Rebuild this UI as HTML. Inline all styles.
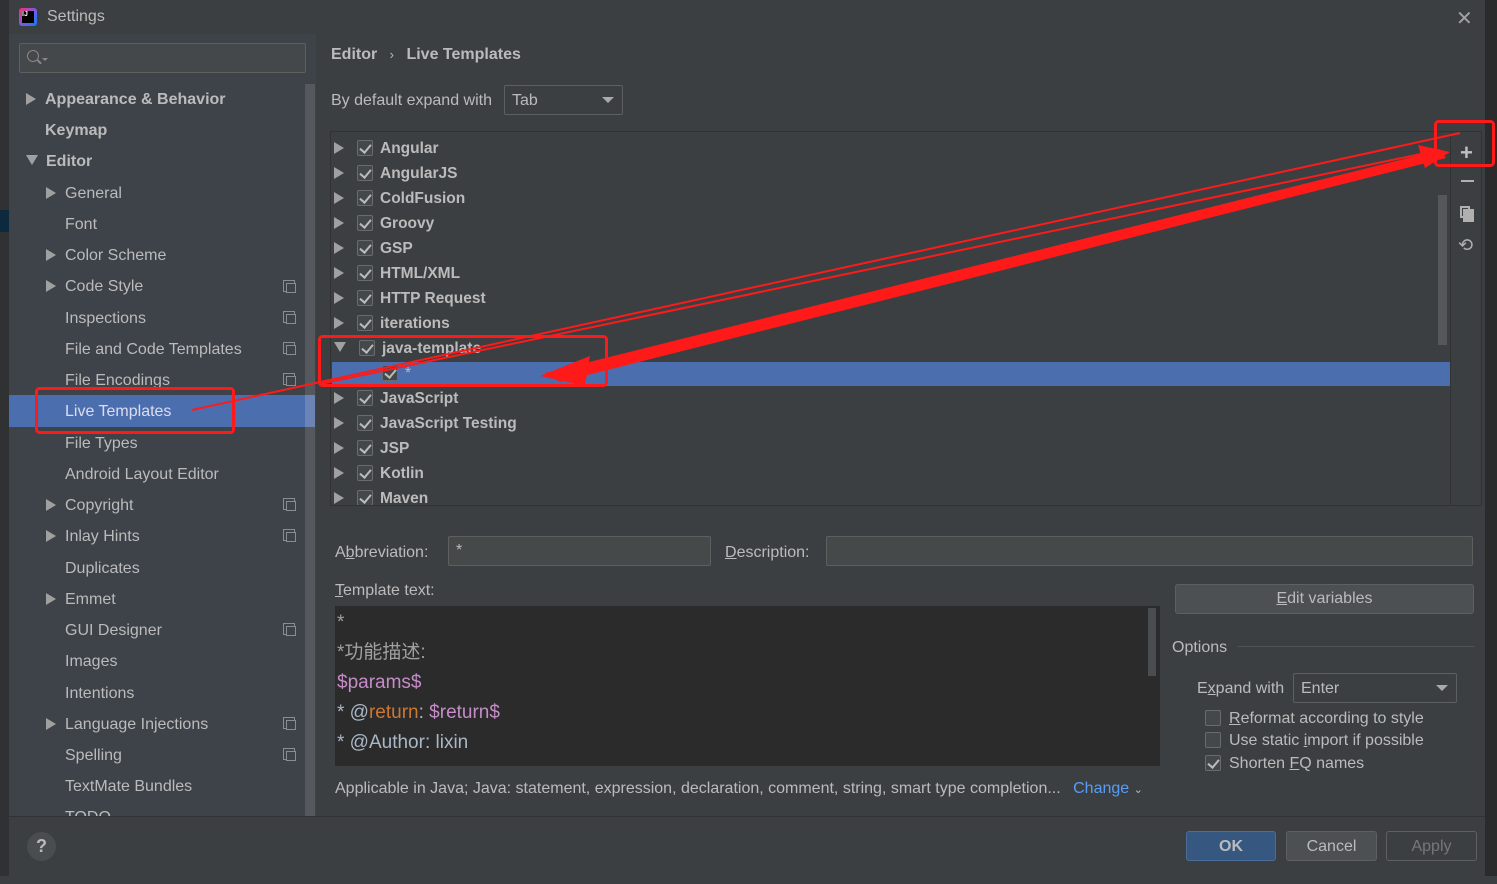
<!DOCTYPE html>
<html><head><meta charset="utf-8"><style>
*{box-sizing:border-box;margin:0;padding:0}
body{width:1497px;height:884px;background:#2b2b2b;font-family:"Liberation Sans","Noto Sans CJK SC",sans-serif;color:#bbbbbb;font-size:16px;position:relative;overflow:hidden}
.a{position:absolute}
.dlg{left:9px;top:0;width:1476px;height:876px;background:#3c3f41}
.side{left:9px;top:34px;width:307px;height:783px;background:#3e4249}
.it{position:absolute;left:0;height:31px;line-height:31px;white-space:nowrap}
.tri{display:inline-block;width:0;height:0;border-top:6px solid transparent;border-bottom:6px solid transparent;border-left:10px solid #a0a0a0;margin-right:9px;vertical-align:-1px}
.trd{display:inline-block;width:0;height:0;border-left:6px solid transparent;border-right:6px solid transparent;border-top:10px solid #a0a0a0;margin-right:8px;vertical-align:1px}
.cp{position:absolute;left:283px;width:12px;height:12px;border:1px solid #8a8d90;}
.cp:after{content:"";position:absolute;left:2px;top:2px;width:8px;height:8px;border:1px solid #8a8d90;background:#3e4249}
.row{position:absolute;left:334px;height:25px;line-height:25px;font-weight:bold;white-space:nowrap;font-size:15.5px}
.cb{display:inline-block;width:16px;height:16px;border:1px solid #6b6b6b;border-radius:2px;background:#43494a;vertical-align:-3px;margin-right:6px;position:relative}
.row .cb{margin-left:4px;margin-right:7px}
.cb.k:after{content:"";position:absolute;left:4px;top:1px;width:5px;height:9px;border-right:2px solid #bbb;border-bottom:2px solid #bbb;transform:rotate(40deg)}
.inp{background:#45494a;border:1px solid #5e6060;border-radius:2px}
u{text-decoration:underline}
.mono{font-family:"Liberation Sans","Noto Sans CJK SC",sans-serif;font-size:19px}
.btn{position:absolute;height:30px;line-height:28px;text-align:center;border:1px solid #5e6060;border-radius:3px;background:#4c5052}
</style></head><body>
<div class="a" style="left:0;top:0;width:9px;height:884px;background:#2f3133"></div>
<div class="a" style="left:0;top:210px;width:9px;height:22px;background:#0d293e"></div>
<div class="a dlg"></div>
<div class="a" style="left:0;top:876px;width:1497px;height:8px;background:#3c3f41"></div>
<div class="a" style="left:19px;top:8px;width:18px;height:18px;background:linear-gradient(135deg,#fe315d,#7c59e3,#087cfa);border-radius:3px"></div>
<div class="a" style="left:22px;top:11px;width:12px;height:12px;background:#000;color:#fff;font-size:7px;font-weight:bold;line-height:8px">IJ</div>
<div class="a" style="left:47px;top:8px;font-size:16px">Settings</div>
<div class="a" style="left:1456px;top:6px;font-size:20px;color:#a0a0a0">✕</div>

<div class="a side"></div>
<div class="a inp" style="left:19px;top:43px;width:287px;height:30px;background:#45484a"></div>
<div class="a" style="left:27px;top:50px;width:12px;height:12px;border:1.5px solid #888;border-radius:50%"></div>
<div class="a" style="left:37px;top:61px;width:5px;height:1.5px;background:#888;transform:rotate(45deg)"></div>
<div class="a" style="left:42px;top:58px;border-left:3px solid transparent;border-right:3px solid transparent;border-top:3px solid #888"></div>
<div class="a" style="left:305px;top:84px;width:10px;height:733px;background:#55585d"></div>
<div class="a" style="left:9px;top:395px;width:296px;height:32px;background:#4b6eaf"></div>
<div class="a" style="left:305px;top:395px;width:10px;height:32px;background:#6c84b5"></div>

<div class="a" style="left:26px;top:1px;width:280px">
<div class="it" style="top:83px;font-weight:bold"><span class="tri"></span>Appearance &amp; Behavior</div>
<div class="it" style="top:114px;left:19px;font-weight:bold">Keymap</div>
<div class="it" style="top:145px;font-weight:bold"><span class="trd"></span>Editor</div>
<div class="it" style="top:177px;left:20px"><span class="tri"></span>General</div>
<div class="it" style="top:208px;left:39px">Font</div>
<div class="it" style="top:239px;left:20px"><span class="tri"></span>Color Scheme</div>
<div class="it" style="top:270px;left:20px"><span class="tri"></span>Code Style</div>
<div class="it" style="top:302px;left:39px">Inspections</div>
<div class="it" style="top:333px;left:39px">File and Code Templates</div>
<div class="it" style="top:364px;left:39px">File Encodings</div>
<div class="it" style="top:395px;left:39px;color:#dde">Live Templates</div>
<div class="it" style="top:427px;left:39px">File Types</div>
<div class="it" style="top:458px;left:39px">Android Layout Editor</div>
<div class="it" style="top:489px;left:20px"><span class="tri"></span>Copyright</div>
<div class="it" style="top:520px;left:20px"><span class="tri"></span>Inlay Hints</div>
<div class="it" style="top:552px;left:39px">Duplicates</div>
<div class="it" style="top:583px;left:20px"><span class="tri"></span>Emmet</div>
<div class="it" style="top:614px;left:39px">GUI Designer</div>
<div class="it" style="top:645px;left:39px">Images</div>
<div class="it" style="top:677px;left:39px">Intentions</div>
<div class="it" style="top:708px;left:20px"><span class="tri"></span>Language Injections</div>
<div class="it" style="top:739px;left:39px">Spelling</div>
<div class="it" style="top:770px;left:39px">TextMate Bundles</div>
<div class="it" style="top:801px;left:39px;height:15px;overflow:hidden">TODO</div>
</div>
<div class="a cp" style="top:280px"></div><div class="a cp" style="top:311px"></div><div class="a cp" style="top:342px"></div><div class="a cp" style="top:373px"></div><div class="a cp" style="top:498px"></div><div class="a cp" style="top:529px"></div><div class="a cp" style="top:623px"></div><div class="a cp" style="top:717px"></div><div class="a cp" style="top:748px"></div>

<div class="a" style="left:331px;top:46px;font-weight:bold">Editor <span style="font-weight:normal;margin:0 8px;font-size:13px">›</span> Live Templates</div>
<div class="a" style="left:331px;top:92px">By default expand with</div>
<div class="a inp" style="left:504px;top:85px;width:119px;height:30px;background:#3c3f41;padding:6px 7px">Tab</div>
<div class="a" style="left:602px;top:97px;border-left:6px solid transparent;border-right:6px solid transparent;border-top:6px solid #aaa"></div>

<div class="a" style="left:330px;top:131px;width:1152px;height:375px;border:1px solid #323232;background:#3c3f41"></div>
<div class="a" style="left:1450px;top:132px;width:1px;height:373px;background:#323232"></div>
<div class="a" style="left:1438px;top:195px;width:9px;height:150px;background:#55585b"></div>
<div class="a" style="left:332px;top:362px;width:1118px;height:24px;background:#4b6eaf"></div>
<div class="a" style="left:1460px;top:140px;font-size:22px;color:#c0c0c0;font-weight:bold">+</div>
<div class="a" style="left:1461px;top:180px;width:13px;height:2px;background:#b0b0b0"></div>
<div class="a" style="left:1460px;top:206px;width:10px;height:12px;border:2px solid #b0b0b0"></div>
<div class="a" style="left:1463px;top:209px;width:11px;height:13px;background:#b0b0b0"></div>
<div class="a" style="left:1458px;top:235px;font-size:18px;color:#b0b0b0">⟲</div>

<div class="row" style="top:136px"><span class="tri"></span><span class="cb k"></span>Angular</div>
<div class="row" style="top:161px"><span class="tri"></span><span class="cb k"></span>AngularJS</div>
<div class="row" style="top:186px"><span class="tri"></span><span class="cb k"></span>ColdFusion</div>
<div class="row" style="top:211px"><span class="tri"></span><span class="cb k"></span>Groovy</div>
<div class="row" style="top:236px"><span class="tri"></span><span class="cb k"></span>GSP</div>
<div class="row" style="top:261px"><span class="tri"></span><span class="cb k"></span>HTML/XML</div>
<div class="row" style="top:286px"><span class="tri"></span><span class="cb k"></span>HTTP Request</div>
<div class="row" style="top:311px"><span class="tri"></span><span class="cb k"></span>iterations</div>
<div class="row" style="top:336px"><span class="trd" style="margin-right:9px"></span><span class="cb k"></span>java-template</div>
<div class="row" style="top:361px;left:378px;font-weight:normal"><span class="cb k"></span>*</div>
<div class="row" style="top:386px"><span class="tri"></span><span class="cb k"></span>JavaScript</div>
<div class="row" style="top:411px"><span class="tri"></span><span class="cb k"></span>JavaScript Testing</div>
<div class="row" style="top:436px"><span class="tri"></span><span class="cb k"></span>JSP</div>
<div class="row" style="top:461px"><span class="tri"></span><span class="cb k"></span>Kotlin</div>
<div class="row" style="top:486px;height:19px;overflow:hidden"><span class="tri"></span><span class="cb k"></span>Maven</div>

<div class="a" style="left:335px;top:544px">A<u>b</u>breviation:</div>
<div class="a inp" style="left:448px;top:536px;width:263px;height:30px;padding:5px 7px">*</div>
<div class="a" style="left:725px;top:544px"><u>D</u>escription:</div>
<div class="a inp" style="left:826px;top:536px;width:647px;height:30px"></div>
<div class="a" style="left:335px;top:582px"><u>T</u>emplate text:</div>
<div class="a" style="left:335px;top:606px;width:825px;height:160px;background:#2b2b2b"></div>
<div class="a" style="left:1148px;top:608px;width:8px;height:68px;background:#4a4d50"></div>
<div class="a mono" style="left:337px;top:608px;line-height:30px;color:#a9b7c6">
<div style="color:#a0a0a0">*</div>
<div style="color:#a0a0a0">*功能描述:</div>
<div style="color:#c58cc8">$params$</div>
<div>* @<span style="color:#cc7832">return</span>: <span style="color:#c58cc8">$return$</span></div>
<div>* @Author: lixin</div>
</div>
<div class="a" style="left:335px;top:780px">Applicable in Java; Java: statement, expression, declaration, comment, string, smart type completion... <span style="color:#589df6;margin-left:8px">Change</span> <span style="font-size:11px">⌄</span></div>

<div class="btn" style="left:1175px;top:584px;width:299px;background:#4c5052"><u>E</u>dit variables</div>
<div class="a" style="left:1172px;top:639px">Options</div>
<div class="a" style="left:1238px;top:646px;width:236px;height:1px;background:#505355"></div>
<div class="a" style="left:1197px;top:680px">E<u>x</u>pand with</div>
<div class="a inp" style="left:1293px;top:673px;width:164px;height:30px;background:#3c3f41;padding:6px 7px">Enter</div>
<div class="a" style="left:1436px;top:685px;border-left:6px solid transparent;border-right:6px solid transparent;border-top:6px solid #aaa"></div>
<div class="a" style="left:1205px;top:710px"><span class="cb" style="margin-right:8px"></span><u>R</u>eformat according to style</div>
<div class="a" style="left:1205px;top:732px"><span class="cb" style="margin-right:8px"></span>Use static <u>i</u>mport if possible</div>
<div class="a" style="left:1205px;top:755px"><span class="cb k" style="margin-right:8px"></span>Shorten <u>F</u>Q names</div>

<div class="a" style="left:9px;top:816px;width:1476px;height:1px;background:#323232"></div>
<div class="a" style="left:27px;top:832px;width:29px;height:29px;border-radius:50%;background:#4a4d50;color:#bbb;font-weight:bold;font-size:18px;text-align:center;line-height:29px">?</div>
<div class="btn" style="left:1186px;top:831px;width:90px;background:#365880;border-color:#4a6e99;font-weight:bold;line-height:30px">OK</div>
<div class="btn" style="left:1286px;top:831px;width:91px;line-height:30px">Cancel</div>
<div class="btn" style="left:1386px;top:831px;width:91px;background:#3c3f41;color:#777;line-height:30px">Apply</div>

<svg class="a" style="left:0;top:0" width="1497" height="884">
<g fill="none" stroke="#ff1a1a" stroke-width="3">
<rect x="36.5" y="388.5" width="197" height="44" rx="3"/>
<rect x="319.5" y="336.5" width="287" height="49" rx="3"/>
<rect x="1435.5" y="121.5" width="58" height="44" rx="3"/>
</g>
<g stroke="#ff1a1a" stroke-width="2">
<line x1="192" y1="410" x2="1460" y2="133"/>
<line x1="320" y1="384" x2="1440" y2="150"/>
</g>
<polygon points="545,373 1440,150 1446,158 560,382" fill="#ff1a1a"/>
<polygon points="540,376 590,356 585,386" fill="#ff1a1a"/>
<polygon points="1450,152 1418,145 1425,168" fill="#ff1a1a"/>
</svg>
</body></html>
